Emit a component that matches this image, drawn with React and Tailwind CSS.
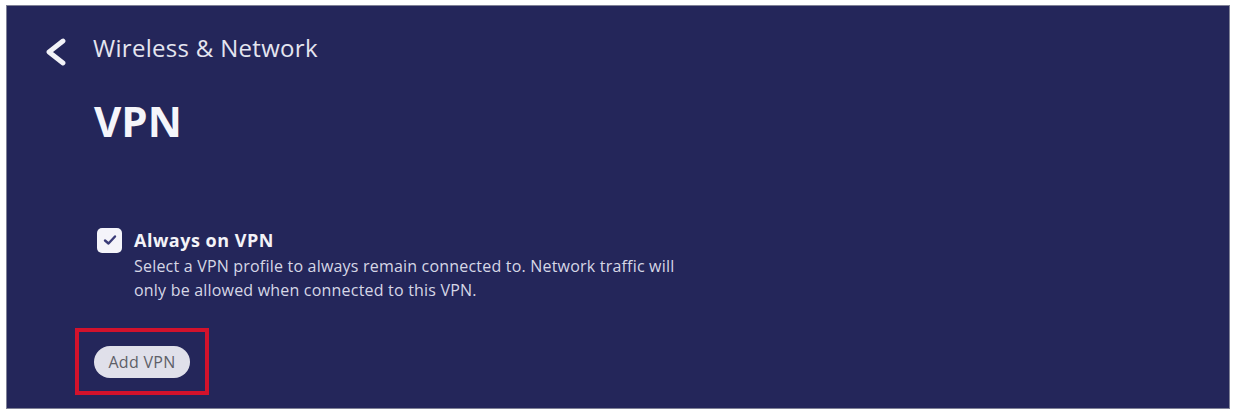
import React from 'react';

function BackChevron() {
    return (
        <svg width="24" height="28" viewBox="0 0 24 28" fill="none" className="shrink-0">
            <path d="M19 3 L5 14 L19 25" stroke="#f2f2f8" strokeWidth="4.8" strokeLinecap="round" strokeLinejoin="round" />
        </svg>
    );
}

function CheckBox() {
    return (
        <div className="w-[25px] h-[25px] rounded-[5px] bg-[#f4f4fa] flex items-center justify-center shrink-0">
            <svg width="14" height="12" viewBox="0 0 14 12" fill="none">
                <path d="M2 6.5 L5.5 9.5 L12 2.5" stroke="#3a3c78" strokeWidth="2.4" strokeLinecap="round" strokeLinejoin="round" />
            </svg>
        </div>
    );
}

export default function App() {
    return (
        <div className="w-[1234px] h-[412px] bg-white pt-[5px] pl-[6px] font-['Open_Sans',sans-serif]">
            <div className="w-[1224px] h-[404px] bg-[#24265a] border border-[#7f8196] flex flex-col">
                {/* header */}
                <div className="flex items-center h-[32px] mt-[26px] pl-[37px]">
                    <div className="mt-[8px]">
                        <BackChevron />
                    </div>
                    <span className="ml-[25px] text-[24px] leading-[32px] tracking-[0.3px] text-[#e4e5f0]">Wireless &amp; Network</span>
                </div>

                <h1 className="mt-[36px] ml-[87px] text-[42px] leading-[42px] font-bold text-[#f5f5fa]">VPN</h1>

                {/* always on toggle */}
                <div className="mt-[86px] ml-[90px] flex items-center gap-[12px] h-[24px]">
                    <CheckBox />
                    <span className="text-[18px] leading-[24px] font-bold tracking-[0.5px] text-[#f3f3f8]">Always on VPN</span>
                </div>
                <p className="mt-[2px] ml-[127px] w-[560px] text-[16px] leading-[24px] tracking-[0.2px] text-[#d6d7e6]">
                    Select a VPN profile to always remain connected to. Network traffic will only be allowed when connected to this VPN.
                </p>

                <div className="mt-[26px] ml-[68px] w-[134px] h-[67px] border-4 border-[#d3122c] flex items-center justify-center">
                    <button className="w-[96px] h-[32px] rounded-full bg-[#e0e0ea] text-[16px] tracking-[0.3px] text-[#5e5f68] flex items-center justify-center">
                        Add VPN
                    </button>
                </div>
            </div>
        </div>
    );
}
